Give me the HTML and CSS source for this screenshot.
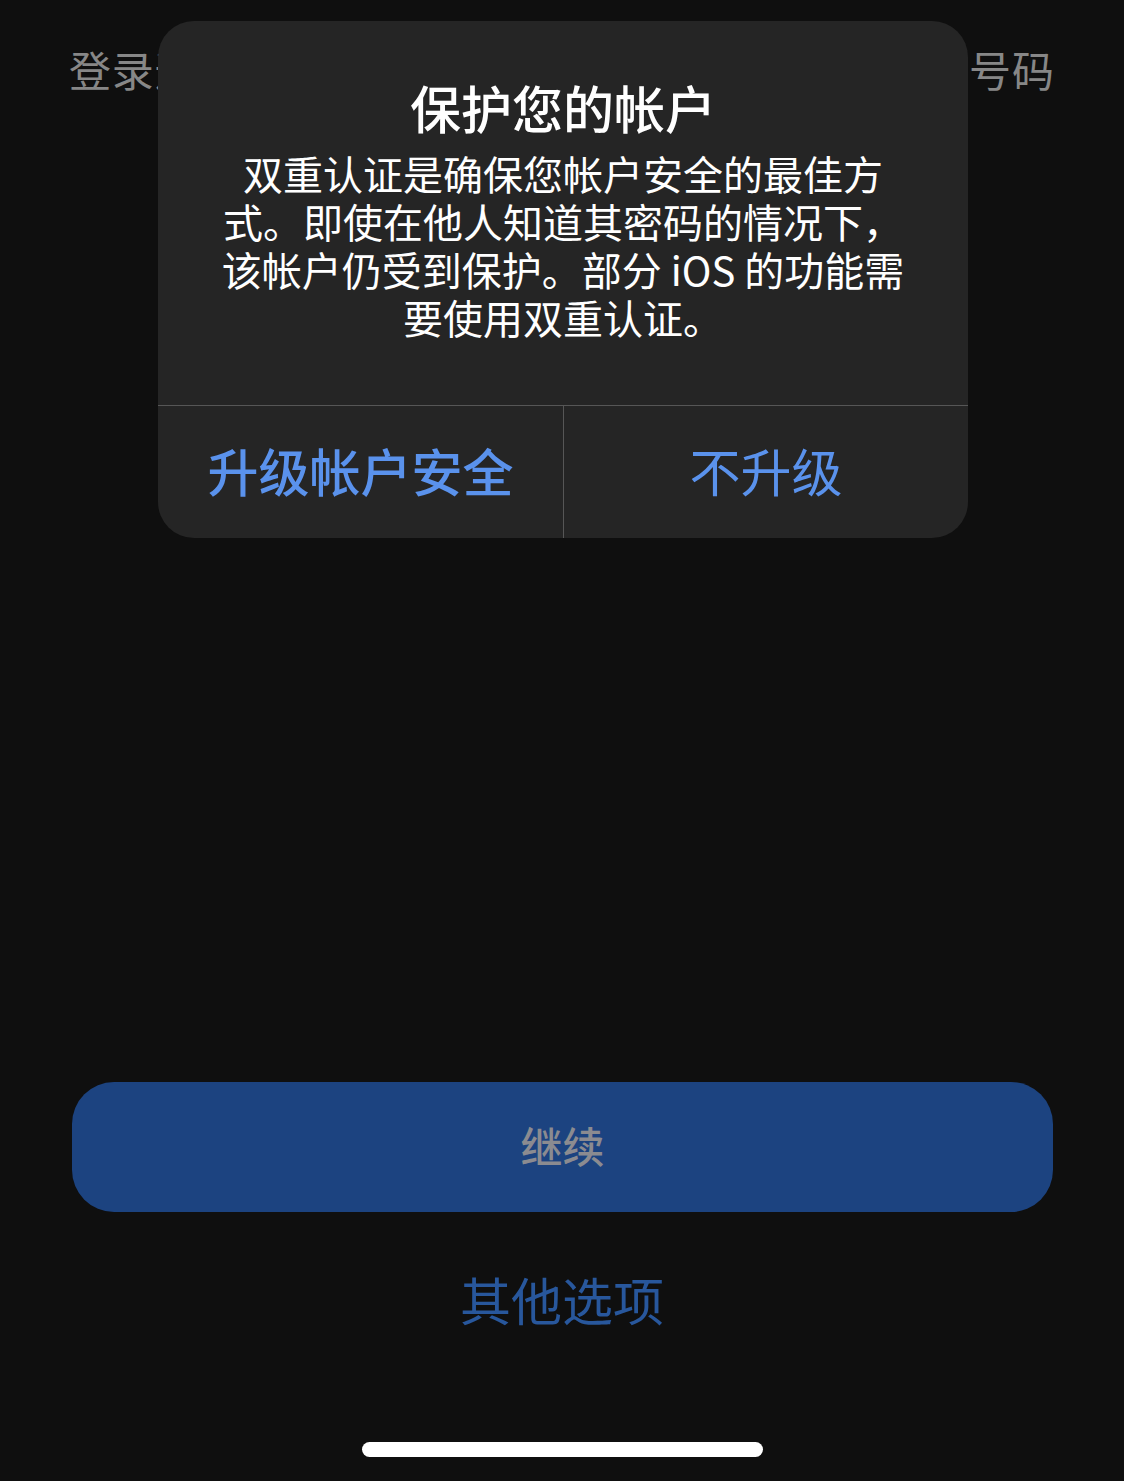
FILE: index.html
```html
<!DOCTYPE html>
<html lang="zh-CN">
<head>
<meta charset="utf-8">
<title>保护您的帐户</title>
<link rel="stylesheet" href="styles.css">
</head>
<body>
<div class="screen">
  <h1 class="heading">登录通过短信或电话接收验证码的可信任的电话号码</h1>
  <div class="spacer"></div>
  <button class="continue">继续</button>
  <a class="other">其他选项</a>
  <div class="home-indicator"></div>

  <div class="alert" role="alertdialog">
    <div class="alert-body">
      <h2 class="alert-title">保护您的帐户</h2>
      <p class="alert-message">双重认证是确保您帐户安全的最佳方<br>式。即使在他人知道其密码的情况下，<br>该帐户仍受到保护。部分 iOS 的功能需<br>要使用双重认证。</p>
    </div>
    <div class="alert-actions">
      <button class="alert-btn primary">升级帐户安全</button>
      <button class="alert-btn">不升级</button>
    </div>
  </div>
</div>
</body>
</html>
```

FILE: styles.css
```css
* {
  box-sizing: border-box;
}

html, body {
  margin: 0;
  padding: 0;
  background: #0f0f0f;
}

body {
  font-family: "Noto Sans CJK SC", "Noto Sans", sans-serif;
  width: 1124px;
  height: 1481px;
  overflow: hidden;
}

.screen {
  position: relative;
  width: 1124px;
  height: 1481px;
  display: flex;
  flex-direction: column;
  align-items: stretch;
}

.heading {
  margin: 44px 0 0;
  padding: 0 70px 0 69px;
  font-size: 42px;
  line-height: 50px;
  font-weight: 400;
  color: #878787;
  text-align: justify;
  text-align-last: justify;
  white-space: nowrap;
  overflow: hidden;
}

.spacer {
  flex: 1;
}

.continue {
  margin: 0 71px 0 72px;
  height: 130px;
  border: none;
  border-radius: 42px;
  background: #1c4380;
  color: #8b8b90;
  font-family: inherit;
  font-size: 42px;
  font-weight: 500;
  padding: 0 0 5px;
}

.other {
  margin-top: 57px;
  height: 60px;
  line-height: 60px;
  text-align: center;
  font-size: 51px;
  color: #28579c;
}

.home-indicator {
  align-self: center;
  margin-top: 113px;
  margin-bottom: 24px;
  width: 401px;
  height: 15px;
  border-radius: 8px;
  background: #ffffff;
}

.alert {
  position: absolute;
  top: 21px;
  left: 158px;
  width: 810px;
  background: #252525;
  border-radius: 36px;
  overflow: hidden;
}

.alert-body {
  padding: 53px 30px 64px;
  text-align: center;
  color: #ffffff;
}

.alert-title {
  margin: 0;
  font-size: 51px;
  line-height: 66px;
  font-weight: 500;
}

.alert-message {
  margin: 9px 0 0;
  font-size: 40px;
  line-height: 48px;
  font-weight: 400;
  white-space: nowrap;
}

.alert-actions {
  display: grid;
  grid-template-columns: 405px 405px;
  border-top: 1px solid #565656;
}

.alert-btn {
  height: 132px;
  border: none;
  background: transparent;
  color: #5a92ec;
  font-family: inherit;
  font-size: 51px;
  font-weight: 400;
  padding: 0 0 4px;
}

.alert-btn.primary {
  font-weight: 500;
}

.alert-btn + .alert-btn {
  border-left: 1px solid #565656;
}
```
